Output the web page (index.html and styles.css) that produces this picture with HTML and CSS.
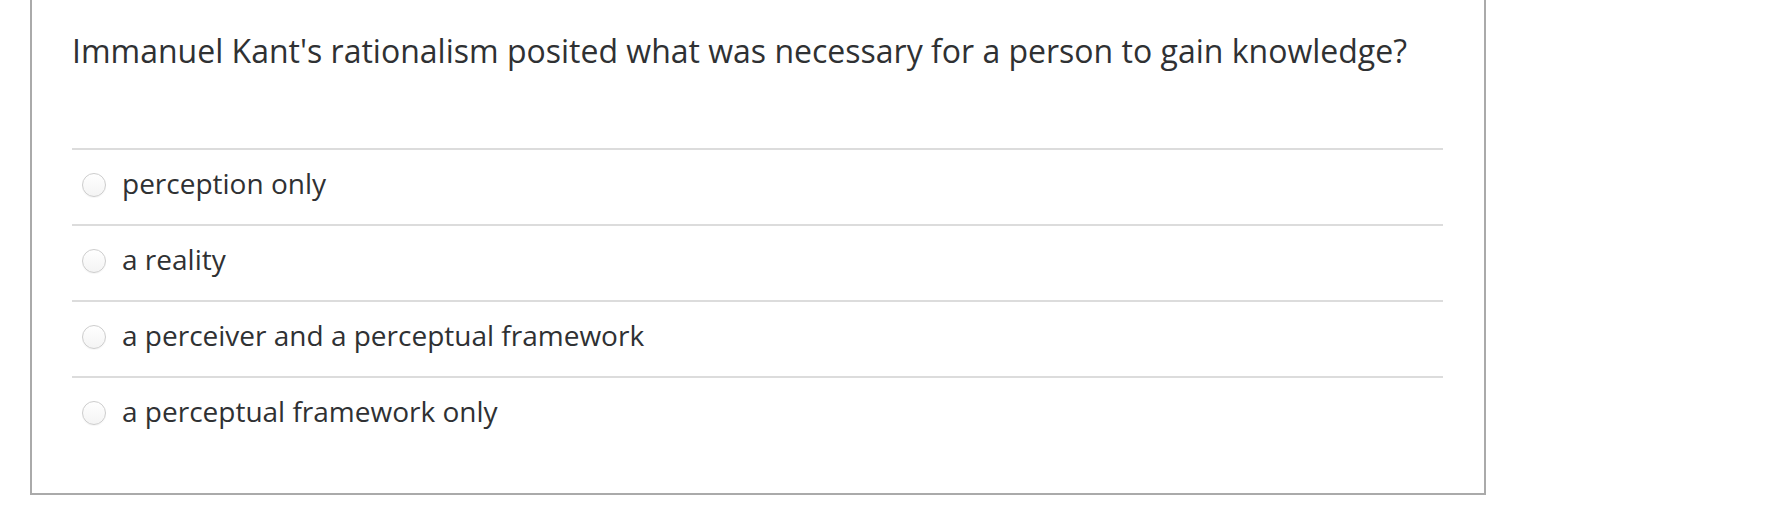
FILE: index.html
```html
<!DOCTYPE html>
<html>
<head>
<meta charset="utf-8">
<link rel="stylesheet" href="styles.css">
</head>
<body>
<div class="card">
  <div class="question">Immanuel Kant's rationalism posited what was necessary for a person to gain knowledge?</div>
  <ul class="answers">
    <li class="answer"><span class="radio"></span><span class="label">perception only</span></li>
    <li class="answer"><span class="radio"></span><span class="label">a reality</span></li>
    <li class="answer"><span class="radio"></span><span class="label">a perceiver and a perceptual framework</span></li>
    <li class="answer"><span class="radio"></span><span class="label">a perceptual framework only</span></li>
  </ul>
</div>
</body>
</html>
```

FILE: styles.css
```css
html, body {
  margin: 0;
  padding: 0;
  background: #fff;
}
body {
  font-family: "Open Sans", "DejaVu Sans", sans-serif;
  color: #2f3133;
}
.card {
  margin-left: 30px;
  width: 1371px;
  padding: 27px 41px 41px 40px;
  border: 2px solid #aaa;
  border-top: none;
}
.question {
  font-size: 32px;
  line-height: 48px;
  margin-bottom: 73px;
}
.answers {
  list-style: none;
  margin: 0;
  padding: 0;
}
.answer {
  display: flex;
  align-items: center;
  border-top: 2px solid #dcdcdc;
  padding: 12px 0 20px 10px;
}
.radio {
  width: 22px;
  height: 22px;
  border-radius: 50%;
  border: 1px solid #cdcdcd;
  background: linear-gradient(#ffffff, #f4f4f4);
  box-shadow: 0 1px 1px rgba(0,0,0,0.04);
  margin-top: 4px;
  margin-right: 16px;
  flex: none;
}
.label {
  font-size: 28px;
  line-height: 42px;
}
```
